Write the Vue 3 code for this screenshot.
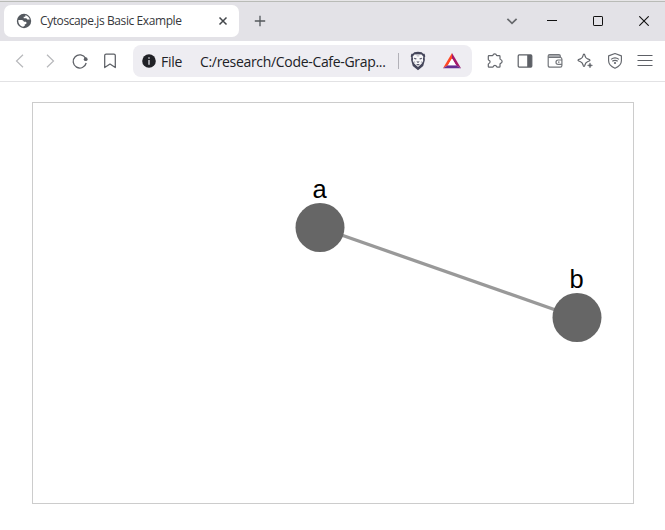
<script setup>
import { ref } from 'vue'

const title = ref('Cytoscape.js Basic Example')
const address = ref('C:/research/Code-Cafe-Grap...')
const nodes = [
  { id: 'a', x: 287, y: 124.5 },
  { id: 'b', x: 544, y: 214.5 },
]
</script>

<template>
  <div class="window">
    <header class="tabs">
      <div class="tab">
        <svg class="globe" width="16" height="16" viewBox="0 0 16 16">
          <circle cx="8" cy="8" r="7.2" fill="#54595f" />
          <path d="M2.300 7.100h2.500c1.800 0 2.900.5 3.100 1.700h1.300c.9 0 1.300.5 1.300 1.200 0 .9-.7 1.200-1.700 1.300v1.400l-1.700 1.100c-2.900-.3-5-3.200-4.800-6.700z" fill="#fff" />
          <path d="M9.300 2.200c2.200.5 4 2 4.500 4.200l-2.500.1-1-1.200H7.700V3.800h1.600z" fill="#fff" />
        </svg>
        <span class="title">{{ title }}</span>
        <svg class="shut" width="10" height="10" viewBox="0 0 10 10"><path d="m1.500 1.500 7 7m0-7-7 7" fill="none" stroke="#43474b" stroke-width="1.500" /></svg>
      </div>
      <button class="new"><svg width="12" height="12" viewBox="0 0 12 12"><path d="M6 .8v10.400M.8 6h10.400" stroke="#54585c" stroke-width="1.300" /></svg></button>
      <div class="controls">
        <button class="search"><svg width="12" height="12" viewBox="0 0 12 12"><path d="m1.400 3.800 4.600 4.500 4.600-4.500" fill="none" stroke="#66686c" stroke-width="1.700" /></svg></button>
        <button><svg width="10" height="10" viewBox="0 0 10 10"><path d="M0 4.500h10" stroke="#111" /></svg></button>
        <button><svg width="10" height="10" viewBox="0 0 10 10"><rect x=".5" y=".5" width="9" height="9" rx=".6" fill="none" stroke="#111" /></svg></button>
        <button><svg width="10" height="10" viewBox="0 0 10 10"><path d="m.3.300 9.400 9.400m0-9.400-9.400 9.400" stroke="#111" stroke-width="1.100" /></svg></button>
      </div>
    </header>

    <nav class="toolbar">
      <button><svg width="18" height="18" viewBox="0 0 18 18"><path d="M12 2.700 5.500 9l6.500 6.300" fill="none" stroke="#b7b8bb" stroke-width="1.200" /></svg></button>
      <button><svg width="18" height="18" viewBox="0 0 18 18"><path d="M6 2.700 12.500 9 6 15.300" fill="none" stroke="#b7b8bb" stroke-width="1.200" /></svg></button>
      <button>
        <svg width="18" height="18" viewBox="0 0 18 18">
          <path d="M14.600 6.300A6.600 6.600 0 1 0 15.200 11" fill="none" stroke="#5d6066" stroke-width="1.300" />
          <circle cx="14.700" cy="7.200" r="1.900" fill="#5d6066" />
        </svg>
      </button>
      <button><svg width="18" height="18" viewBox="0 0 18 18"><path d="M3.700 15.600V3.400Q3.700 2 5.100 2h7.800q1.400 0 1.400 1.400v12.200L9 12.100z" fill="none" stroke="#5d6066" stroke-width="1.250" stroke-linejoin="round" /></svg></button>

      <div class="address">
        <svg width="14" height="14" viewBox="0 0 14 14"><circle cx="7" cy="7" r="6.800" fill="#202126" /><path d="M6.200 3.300h1.600v1.500H6.200zM6.200 6h1.600v4.700H6.200z" fill="#bcbcc2" /></svg>
        <span class="scheme">File</span>
        <span class="url">{{ address }}</span>
        <i class="divider"></i>
        <svg class="lion" width="18" height="20" viewBox="0 0 18 20">
          <path d="m5.300 1.200 3.700-.5 3.700.5 1.500 1.500 1.400.1.700 2.500-.6 1.200.2 2.400-1.700 6L9 19.300l-5.200-4.400-1.700-6 .2-2.400-.6-1.200.7-2.500 1.400-.1z" fill="#45465b" />
          <path d="m5.400 3.500 3.600-.3 3.600.3 1.800 2.300-.5 1.700.3 2.500-1.600 2.800L9 16l-3.600-3.200L3.800 10l.3-2.500-.5-1.700z" fill="#f7f7f9" />
          <path d="m5 6.700 2.600.7-.5 1.100-1.700-.4zm8 0-2.600.7.500 1.100 1.700-.4zM7.300 10.600h3.400L9 12zM7 13.500l2-.6 2 .6-2 1z" fill="#45465b" />
          <path d="m7.900 3 .5 2.500M10.100 3l-.5 2.500M5.300 10.200l.6 2M12.700 10.200l-.6 2" stroke="#8b8b99" stroke-width=".6" />
        </svg>
        <svg class="bat" width="20" height="18" viewBox="0 0 20 18">
          <path d="M10 1 1 16.200l5-3L10 6.400z" fill="#ff4724" />
          <path d="m10 1 9 15.200-5-3L10 6.400z" fill="#a4186b" />
          <path d="M1 16.200h18l-5-3H6z" fill="#662d91" />
          <path d="m10 6.400 4 6.800H6z" fill="#fff" />
        </svg>
      </div>

      <div class="actions">
        <button><svg width="18" height="18" viewBox="0 0 18 18"><path d="M3 3.700h3.300q.7 0 .7-.6C7.200 1.500 10.200 1.500 10.400 3.100q0 .6.700.6h2.200q.7 0 .7.700v2.300q0 .6.600.8c2 .6 2 3.300 0 3.900q-.6.200-.6.800v2.200q0 .7-.7.700h-1.900q-.6 0-.8-.6c-.5-1.500-2.800-1.500-3.300 0q-.2.600-.8.600H3q-.7 0-.7-.7v-2.100q0-.6.600-.8c1.600-.6 1.600-2.700 0-3.300q-.6-.2-.6-.8v-3q0-.7.700-.7z" fill="none" stroke="#64676d" stroke-width="1.200" stroke-linejoin="round" /></svg></button>
        <button><svg width="18" height="18" viewBox="0 0 18 18"><rect x="2.200" y="2.900" width="13.600" height="12.200" rx="1" fill="none" stroke="#5d6066" stroke-width="1.200" /><path d="M11.200 3h4.600v12h-4.600z" fill="#5d6066" /></svg></button>
        <button>
          <svg width="18" height="18" viewBox="0 0 18 18">
            <path d="M2.200 6V4q0-1.500 1.500-1.500h9.100q1.500 0 1.500 1.500v2z" fill="#a5a7ab" />
            <path d="M2.200 5.500h12q1.700 0 1.700 1.700v6.300q0 1.700-1.700 1.700H3.900q-1.700 0-1.700-1.700V4q0-1.500 1.500-1.500h9.100q1.500 0 1.500 1.500v1.500M15.800 8h-3.600a2.200 2.200 0 0 0 0 4.400h3.600M12 10.200h1.500" fill="none" stroke="#73767b" stroke-width="1.200" />
          </svg>
        </button>
        <button>
          <svg width="18" height="18" viewBox="0 0 18 18">
            <path d="M8 2.200c.7 0 .8.500 1.100 1.900.5 2 .9 2.500 2.900 3 1.400.4 2 .5 2 1.200s-.6.900-2 1.200c-2 .6-2.400 1-2.900 3-.3 1.400-.4 2-1.100 2s-.8-.6-1.100-2c-.5-2-.9-2.400-2.900-3-1.400-.3-2-.5-2-1.200s.6-.8 2-1.200c2-.5 2.400-1 2.900-3C7.200 2.700 7.300 2.200 8 2.200z" fill="none" stroke="#5d6066" stroke-width="1.200" />
            <path d="m14 10.900.7 1.800 1.800.7-1.800.7-.7 1.800-.7-1.800-1.800-.7 1.800-.7z" fill="#5d6066" stroke="#5d6066" stroke-width=".5" />
          </svg>
        </button>
        <button>
          <svg width="18" height="18" viewBox="0 0 18 18">
            <path d="m9 1.500 6.400 2.400v4.900c0 3.300-2.700 6-6.400 7.500-3.700-1.500-6.400-4.200-6.400-7.500V3.900z" fill="none" stroke="#64676d" stroke-width="1.150" stroke-linejoin="round" />
            <path d="M5 7.400Q9 4.400 13 7.400M6.300 9.300q2.700-1.900 5.400 0" fill="none" stroke="#64676d" stroke-width="1.100" /><circle cx="9" cy="11" r="1.100" fill="#64676d" />
          </svg>
        </button>
        <button><svg width="18" height="18" viewBox="0 0 18 18"><path d="M1.500 3.500h15m-15 5h15m-15 5h15" stroke="#5d6066" stroke-width="1.200" /></svg></button>
      </div>
    </nav>

    <main>
      <div class="canvas">
        <svg width="600" height="400" viewBox="0 0 600 400">
          <line :x1="nodes[0].x" :y1="nodes[0].y" :x2="nodes[1].x" :y2="nodes[1].y" stroke="#999" stroke-width="3.300" />
          <g v-for="node in nodes" :key="node.id">
            <circle :cx="node.x" :cy="node.y" r="24.500" fill="#666" />
            <text :x="node.x - 0.4" :y="node.y - 30" text-anchor="middle">{{ node.id }}</text>
          </g>
        </svg>
      </div>
    </main>
  </div>
</template>

<style>
body { background: #fff; }
</style>

<style scoped>
* { box-sizing: border-box; }
.window { width: 665px; height: 530px; overflow: hidden; background: #fff; font-family: "Open Sans", "Noto Sans", sans-serif; }
svg { display: block; flex: none; }
button { display: flex; align-items: center; justify-content: center; flex: none; padding: 0; border: 0; background: none; }
.tabs { display: flex; height: 41px; padding: 3px 0 4px 4px; background: linear-gradient(#e7e6e8 1px, #b9bbb7 1px, #b9bbb7 2px, #e3e2e7 2px); overflow: hidden; }
.tab { display: flex; align-items: center; flex: none; width: 235px; height: 32px; margin-top: 2px; padding: 0 11px 0 12px; border-radius: 7px; background: #fff; }
.title { margin-left: 8px; font-size: 12px; letter-spacing: -.41px; line-height: 16px; white-space: nowrap; color: #36383c; }
.shut { margin-left: auto; }
.new { width: 42px; height: 36px; }
.controls { display: flex; flex: none; margin-left: 214px; height: 36px; }
.controls button { width: 46px; }
.controls .search { width: 34px; }
.toolbar { display: flex; align-items: center; height: 41px; padding-left: 5px; border-bottom: 1px solid #e2e2e4; }
.toolbar button { width: 30px; height: 30px; }
.address { display: flex; align-items: center; flex: none; width: 339px; height: 32px; margin-left: 8px; padding-left: 9px; border-radius: 8px; background: #eeedf2; color: #202126; font-size: 14px; white-space: nowrap; }
.scheme { width: 39px; margin-left: 5px; letter-spacing: -.3px; }
.url { width: 198px; letter-spacing: -.32px; }
.divider { width: 1px; height: 16px; background: #b2b1b8; }
.lion { margin-left: 10px; }
.bat { margin-left: 15px; }
.actions { display: flex; margin-left: 8px; }
main { padding: 20px 31px 0 32px; }
.canvas { width: 602px; height: 402px; border: 1px solid #ccc; }
text { font-family: "Liberation Sans", Arial, sans-serif; font-size: 25.500px; fill: #000; }
</style>
